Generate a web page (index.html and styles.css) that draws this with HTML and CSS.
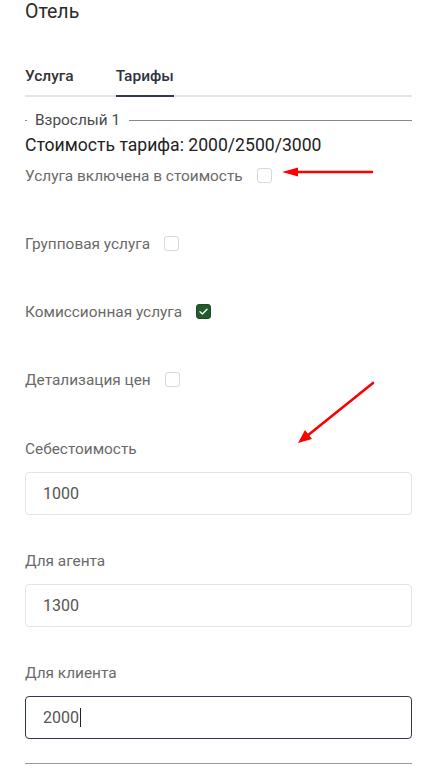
FILE: index.html
```html
<!DOCTYPE html>
<html lang="ru">
<head>
<meta charset="utf-8">
<title>Отель</title>
<link rel="stylesheet" href="styles.css">
</head>
<body>
<div class="page">
  <h1 class="title">Отель</h1>
  <div class="tabs">
    <div class="tab">Услуга</div>
    <div class="tab tab-active">Тарифы</div>
  </div>
  <div class="legend-row">
    <span class="legend-tick"></span>
    <span class="legend-text">Взрослый 1</span>
    <span class="legend-line"></span>
  </div>
  <div class="price">Стоимость тарифа: 2000/2500/3000</div>
  <div class="checks">
    <label class="check-row"><span>Услуга включена в стоимость</span><span class="box"></span></label>
    <label class="check-row"><span>Групповая услуга</span><span class="box"></span></label>
    <label class="check-row"><span>Комиссионная услуга</span><span class="box box-on"><svg viewBox="0 0 15 15" width="15" height="15"><path d="M4 7.8 L6.4 10 L11 5.2" fill="none" stroke="#fff" stroke-width="1.3" stroke-linecap="round" stroke-linejoin="round"/></svg></span></label>
    <label class="check-row"><span>Детализация цен</span><span class="box"></span></label>
  </div>
  <div class="field">
    <div class="field-label">Себестоимость</div>
    <div class="input">1000</div>
  </div>
  <div class="field">
    <div class="field-label">Для агента</div>
    <div class="input">1300</div>
  </div>
  <div class="field">
    <div class="field-label">Для клиента</div>
    <div class="input input-focus">2000<span class="caret"></span></div>
  </div>
  <div class="bottom-line"></div>
  <svg class="arrows" width="434" height="771" viewBox="0 0 434 771">
    <line x1="372" y1="172" x2="294" y2="172" stroke="#f00" stroke-width="2.6" stroke-linecap="round"/>
    <polygon points="282,172 298,167.5 298,176.5" fill="#f00"/>
    <line x1="373" y1="383" x2="307" y2="436" stroke="#f00" stroke-width="2.6" stroke-linecap="round"/>
    <polygon points="298,443 305,430 312,439" fill="#f00"/>
  </svg>
</div>
</body>
</html>
```

FILE: styles.css
```css
html, body {
  margin: 0;
  padding: 0;
  background: #fff;
}
body {
  font-family: Roboto, "Noto Sans", "Liberation Sans", sans-serif;
  color: #333;
}
.page {
  position: relative;
  width: 387px;
  padding: 0 22px 0 25px;
  min-height: 771px;
}
.title {
  margin: 0;
  font-size: 19.5px;
  font-weight: 400;
  line-height: 24px;
  color: #2b2b2b;
}
.tabs {
  display: flex;
  gap: 42px;
  margin-top: 41.5px;
  border-bottom: 2px solid #e3e5ea;
}
.tab {
  font-size: 15.5px;
  font-weight: 500;
  line-height: 20px;
  padding-bottom: 9px;
  margin-bottom: -2px;
  border-bottom: 2px solid transparent;
  color: #333;
}
.tab-active {
  border-bottom-color: #2e3a4b;
  color: #2e3440;
}
.legend-row {
  display: flex;
  align-items: center;
  margin-top: 13.5px;
  height: 20px;
}
.legend-tick {
  width: 2px;
  height: 1px;
  background: #888;
}
.legend-text {
  font-size: 15.4px;
  line-height: 20px;
  color: #4a4a4a;
  margin: 0 9px 0 8px;
}
.legend-line {
  flex: 1;
  height: 1px;
  background: #888;
}
.price {
  margin-top: 4px;
  font-size: 17.6px;
  line-height: 22px;
  color: #222;
}
.checks {
  display: flex;
  flex-direction: column;
  gap: 48px;
  margin-top: 9.5px;
}
.check-row {
  display: flex;
  align-items: center;
  gap: 14px;
  height: 20px;
  font-size: 15.4px;
  line-height: 20px;
  color: #6a6a6a;
}
.box {
  width: 15px;
  height: 15px;
  box-sizing: border-box;
  border: 1px solid #d6d9e1;
  border-radius: 3px;
  background: #fff;
  display: flex;
}
.box-on {
  background: #235a2c;
  border-color: #1d4a24;
}
.box-on svg {
  margin: -1px;
}
.field {
  margin-top: 49px;
}
.field + .field {
  margin-top: 36px;
}
.field-label {
  font-size: 15.4px;
  line-height: 20px;
  color: #6a6a6a;
}
.input {
  margin-top: 13px;
  height: 43px;
  box-sizing: border-box;
  border: 1px solid #e2e4ea;
  border-radius: 4px;
  display: flex;
  align-items: center;
  padding-left: 17px;
  font-size: 16px;
  color: #555;
}
.input-focus {
  border-color: #2e3a4b;
}
.caret {
  width: 1px;
  height: 19px;
  background: #222;
  margin-left: 1px;
}
.bottom-line {
  margin-top: 24px;
  height: 1px;
  background: #9a9a9a;
}
.arrows {
  position: absolute;
  left: 0;
  top: 0;
  pointer-events: none;
}
```
